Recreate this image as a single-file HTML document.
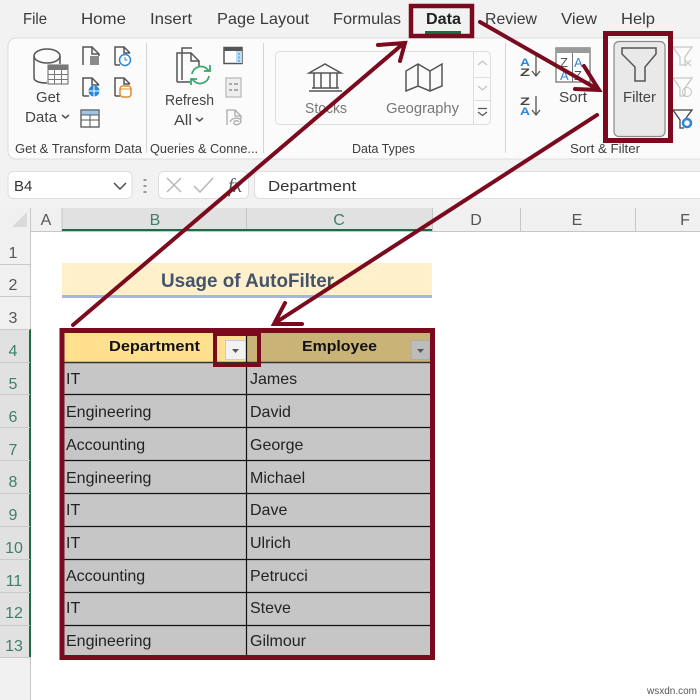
<!DOCTYPE html>
<html><head><meta charset="utf-8"><style>
html,body{margin:0;padding:0;background:#fff}
svg{display:block}
text{font-family:"Liberation Sans",sans-serif;fill:#333}
.tab{font-size:16px;fill:#3a3a3a}
.lb{font-size:14px;fill:#444}
.gl{font-size:13px;fill:#3d3d3d}
.rh{font-size:16px;fill:#555;text-anchor:middle}
.rs{font-size:16px;fill:#3f7f69;text-anchor:middle}
.d{font-size:16px;fill:#222}
.h{font-size:15px;font-weight:bold;fill:#111}
.ic{fill:none;stroke:#555;stroke-width:1.5}
.red{stroke:#7b0a1e;fill:none}
</style></head><body>
<svg width="700" height="700" viewBox="0 0 700 700" xmlns="http://www.w3.org/2000/svg">
<rect width="700" height="700" fill="#fff"/>
<rect width="700" height="231" fill="#f2f2f2"/>
<!-- tabs -->
<text class="tab" x="23" y="24" textLength="24" lengthAdjust="spacingAndGlyphs">File</text>
<text class="tab" x="81" y="24" textLength="45" lengthAdjust="spacingAndGlyphs">Home</text>
<text class="tab" x="150" y="24" textLength="42" lengthAdjust="spacingAndGlyphs">Insert</text>
<text class="tab" x="217" y="24" textLength="92" lengthAdjust="spacingAndGlyphs">Page Layout</text>
<text class="tab" x="333" y="24" textLength="68" lengthAdjust="spacingAndGlyphs">Formulas</text>
<text class="tab" x="426" y="24" textLength="35" lengthAdjust="spacingAndGlyphs" style="font-weight:bold;fill:#222">Data</text>
<text class="tab" x="485" y="24" textLength="52" lengthAdjust="spacingAndGlyphs">Review</text>
<text class="tab" x="561" y="24" textLength="36" lengthAdjust="spacingAndGlyphs">View</text>
<text class="tab" x="621" y="24" textLength="34" lengthAdjust="spacingAndGlyphs">Help</text>
<rect x="425" y="31" width="36" height="3" fill="#1e6b44"/>
<!-- ribbon -->
<rect x="8" y="38" width="720" height="121" rx="8" fill="#fbfbfb" stroke="#dcdcdc"/>
<path d="M146.500 43V153M263.500 43V153M505.500 43V153" stroke="#d4d4d4"/>
<!-- Get data -->
<g class="ic">
<path d="M34 56V78c0 3 5 5 13 5M60 56V64"/><ellipse cx="47" cy="56" rx="13" ry="7"/>
</g>
<rect x="48" y="65" width="20" height="19" fill="#fbfbfb" stroke="#666"/>
<rect x="48" y="65" width="20" height="5" fill="#777"/>
<path d="M48 74.500H68M48 79.500H68M54.500 70V84M61.500 70V84" stroke="#777"/>
<text x="36" y="102" style="font-size:14.500px;fill:#444" textLength="24" lengthAdjust="spacingAndGlyphs">Get</text>
<text x="25" y="122" style="font-size:14.500px;fill:#444" textLength="32" lengthAdjust="spacingAndGlyphs">Data</text>
<path d="M62 115l3.500 3 3.500-3" class="ic"/>
<g class="ic" stroke-width="1.300">
<path d="M83 65V47h9l7 7v2M92 47v7h7"/><path d="M115 65V47h9l6 6M124 47v6h6M115 65h5"/>
<path d="M83 96V78h9l7 7M92 78v7h7M83 96h6"/><path d="M115 96V78h9l6 6M124 78v6h6M115 96h5"/>
</g>
<rect x="90" y="56" width="9" height="9" fill="#8a8a8a"/>
<circle cx="125" cy="60" r="5.500" fill="#fff" stroke="#2b88d8" stroke-width="1.500"/><path d="M125 57v3h2.500" stroke="#2b88d8" fill="none"/>
<circle cx="94" cy="91" r="5.500" fill="#2b88d8"/><path d="M88.500 91h11M94 85.500v11" stroke="#fff"/>
<rect x="120" y="86" width="11" height="11" rx="3" fill="#fff" stroke="#e08a2e" stroke-width="1.500"/><path d="M120 89h11" stroke="#e08a2e"/>
<rect x="81" y="110" width="18" height="17" fill="#fff" stroke="#555" stroke-width="1.300"/><path d="M81 115h18" stroke="#5a5a5a" stroke-width="1"/><path d="M81 120h18M90 115v12" stroke="#555"/><rect x="82" y="110.500" width="16" height="4" fill="#9fc4e4"/>
<text class="gl" x="15" y="153" textLength="127" lengthAdjust="spacingAndGlyphs">Get &amp; Transform Data</text>
<!-- Refresh -->
<g class="ic">
<path d="M182 80V48h10"/><path d="M177 82V53h14l8 8v5"/><path d="M191 53v8h8"/><path d="M177 82h13"/>
</g>
<g fill="none" stroke="#3aa76d" stroke-width="1.800">
<path d="M192 74a9 9 0 0 1 15-5l2 2M209 76a9 9 0 0 1-15 5l-2-2"/>
<path d="M210 65v6h-6M191 85v-6h6"/>
</g>
<text x="165" y="105" style="font-size:14.500px;fill:#444" textLength="49" lengthAdjust="spacingAndGlyphs">Refresh</text>
<text x="174" y="125" style="font-size:14.500px;fill:#444" textLength="18" lengthAdjust="spacingAndGlyphs">All</text>
<path d="M196 118l3.500 3 3.500-3" class="ic"/>
<rect x="224" y="47.500" width="18" height="16" fill="#fff" stroke="#555" stroke-width="1.500"/><rect x="224" y="47.500" width="18" height="3.500" fill="#555"/><rect x="236" y="51" width="6" height="12" fill="#bcdcf2"/><path d="M239 53v9" stroke="#2b88d8" stroke-dasharray="2 1.500"/>
<rect x="226" y="78" width="15" height="19" fill="#eee" stroke="#bbb" stroke-width="1.300"/><path d="M229 84h3M234 84h4M229 90h3M234 90h4" stroke="#aaa" stroke-width="2"/>
<path d="M227 125V110h8l6 6v3M235 110v6h6" fill="none" stroke="#aaa" stroke-width="1.300"/><path d="M230 122c2-5 11-5 11-1s-7 5-7 2 4-3 5-1" fill="none" stroke="#aaa" stroke-width="1.300"/>
<text class="gl" x="150" y="153" textLength="108" lengthAdjust="spacingAndGlyphs">Queries &amp; Conne...</text>
<!-- Data types -->
<rect x="275.500" y="51.500" width="215" height="73" rx="4" fill="#fbfbfb" stroke="#dedede"/>
<path d="M473.500 52V124M473 77.500H491M473 100.500H491" stroke="#dedede"/>
<path d="M478 65l4.500-4 4.500 4M478 86l4.500 4 4.500-4" fill="none" stroke="#c4c4c4" stroke-width="1.200"/>
<path d="M478 108.500h9M478 112l4.500 3.500 4.500-3.500" fill="none" stroke="#555" stroke-width="1.200"/>
<g fill="none" stroke="#555" stroke-width="1.500">
<path d="M309 73l16-9 16 9zM309 91h33M312 88h27M314 73v15M321 73v15M330 73v15M337 73v15"/>
<path d="M406 71l12-7 12 7 12-7v22l-12 5-12-5-12 5zM418 64v22M430 71v20"/>
</g>
<text x="305" y="113" style="font-size:14.500px;fill:#777" textLength="42" lengthAdjust="spacingAndGlyphs">Stocks</text>
<text x="386" y="113" style="font-size:14.500px;fill:#777" textLength="73" lengthAdjust="spacingAndGlyphs">Geography</text>
<text class="gl" x="352" y="153" textLength="63" lengthAdjust="spacingAndGlyphs">Data Types</text>
<!-- Sort -->
<text x="520" y="66" style="font-size:11px;font-weight:bold;fill:#2b88d8" textLength="10" lengthAdjust="spacingAndGlyphs">A</text>
<text x="520" y="76" style="font-size:11px;font-weight:bold;fill:#444" textLength="10" lengthAdjust="spacingAndGlyphs">Z</text>
<text x="520" y="105" style="font-size:11px;font-weight:bold;fill:#444" textLength="10" lengthAdjust="spacingAndGlyphs">Z</text>
<text x="520" y="115" style="font-size:11px;font-weight:bold;fill:#2b88d8" textLength="10" lengthAdjust="spacingAndGlyphs">A</text>
<path d="M536 56v20M532 71l4 5 4-5M536 96v19M532 110l4 5 4-5" fill="none" stroke="#555" stroke-width="1.300"/>
<rect x="556" y="48" width="34" height="34" fill="#fff" stroke="#777" stroke-width="1.300"/><rect x="556" y="48" width="34" height="5" fill="#9a9a9a"/><path d="M572.500 53v29" stroke="#777"/>
<text x="560" y="67" style="font-size:13px;fill:#555">Z</text><text x="574" y="67" style="font-size:13px;fill:#2b88d8">A</text>
<text x="560" y="80" style="font-size:13px;fill:#2b88d8">A</text><text x="574" y="80" style="font-size:13px;fill:#555">Z</text>
<text x="559" y="102" style="font-size:14.500px;fill:#444" textLength="28" lengthAdjust="spacingAndGlyphs">Sort</text>
<!-- filter btn -->
<rect x="614" y="41.500" width="51" height="95" rx="5" fill="#e9e9e9" stroke="#8a8a8a" stroke-width="1.200"/>
<path d="M622 48h34v6l-11 13v14h-10V67l-13-13z" fill="none" stroke="#555" stroke-width="1.500"/>
<text x="623" y="102" style="font-size:14.500px;fill:#444" textLength="33" lengthAdjust="spacingAndGlyphs">Filter</text>
<path d="M673 47h19l-7 10v8l-5 0V57z" fill="none" stroke="#c8c8c8" stroke-width="1.300"/>
<path d="M685 60l6 6M691 60l-6 6" stroke="#c8c8c8" stroke-width="1.200"/>
<path d="M673 78h19l-7 10v8l-5 0V88z" fill="none" stroke="#c8c8c8" stroke-width="1.300"/>
<circle cx="687" cy="92" r="4.500" fill="none" stroke="#c0c0c0"/>
<path d="M673 110h19l-6 8M673 110l7 10v8h4" fill="none" stroke="#444" stroke-width="1.300"/>
<circle cx="687" cy="123" r="4" fill="none" stroke="#2b88d8" stroke-width="2.500"/>
<text class="gl" x="570" y="153" textLength="70" lengthAdjust="spacingAndGlyphs">Sort &amp; Filter</text>
<!-- formula bar -->
<rect x="8" y="171.500" width="124" height="27" rx="5" fill="#fff" stroke="#dedede"/>
<text x="14" y="191" style="font-size:15px;fill:#333">B4</text>
<path d="M114 183l6 6 6-6" fill="none" stroke="#444" stroke-width="1.400"/>
<path d="M145 179v2M145 185v2M145 191v2" stroke="#999" stroke-width="3"/>
<rect x="158.500" y="171.500" width="90" height="27" rx="5" fill="#fff" stroke="#dedede"/>
<path d="M167 178l14 14M181 178l-14 14M194 186l6 6 13-14" fill="none" stroke="#b8b8b8" stroke-width="1.500"/>
<text x="228" y="192" style="font-family:'Liberation Serif',serif;font-size:20px;font-style:italic;fill:#555">fx</text>
<rect x="254.500" y="171.500" width="460" height="27" rx="5" fill="#fff" stroke="#dedede"/>
<text x="268" y="191" style="font-size:15px;fill:#333" textLength="88" lengthAdjust="spacingAndGlyphs">Department</text>
<!-- col headers -->
<rect x="0" y="208" width="700" height="23" fill="#f0f0f0"/>
<rect x="62" y="208" width="370" height="22" fill="#e1e1e1"/>
<path d="M27 212V227H12z" fill="#dadada"/>
<path d="M30.500 208V700M62 208V231M246.500 208V230M432.500 208V231M520.500 208V231M635.500 208V231" stroke="#c6c6c6"/>
<path d="M0 231.500H700" stroke="#c6c6c6"/>
<rect x="62" y="229" width="370" height="2" fill="#1e6b44"/>
<text class="rh" x="46" y="225">A</text>
<text class="rs" x="155" y="225">B</text>
<text class="rs" x="339" y="225">C</text>
<text class="rh" x="476" y="225">D</text>
<text class="rh" x="577" y="225">E</text>
<text class="rh" x="685" y="225">F</text>
<!-- row headers -->
<rect x="0" y="231" width="30" height="469" fill="#f0f0f0"/>
<rect x="0" y="329" width="30" height="328" fill="#e1e1e1"/>
<rect x="29" y="329" width="2" height="328" fill="#1e6b44"/>
<path d="M0 264.500H30M0 296.500H30M0 329.500H30M0 362.500H30M0 394.500H30M0 427.500H30M0 460.500H30M0 493.500H30M0 526.500H30M0 559.500H30M0 592.500H30M0 625.500H30M0 657.500H30" stroke="#c9c9c9"/>
<text class="rh" x="13" y="258">1</text><text class="rh" x="13" y="290">2</text><text class="rh" x="13" y="323">3</text>
<text class="rs" x="13" y="356">4</text><text class="rs" x="13" y="389">5</text><text class="rs" x="13" y="422">6</text><text class="rs" x="13" y="455">7</text><text class="rs" x="13" y="487">8</text><text class="rs" x="13" y="520">9</text>
<text class="rs" x="14" y="553">10</text><text class="rs" x="14" y="586">11</text><text class="rs" x="14" y="618">12</text><text class="rs" x="14" y="651">13</text>
<!-- title -->
<rect x="62" y="263" width="370" height="33" fill="#fff0cb"/>
<rect x="62" y="295" width="370" height="3" fill="#a5b8d9"/>
<text x="161" y="287" style="font-size:19px;font-weight:bold;fill:#44546a" textLength="173" lengthAdjust="spacingAndGlyphs">Usage of AutoFilter</text>
<!-- table -->
<rect x="62" y="330" width="371" height="328" fill="#c6c6c6"/>
<rect x="62" y="330" width="185" height="32" fill="#ffe08f"/>
<rect x="247" y="330" width="186" height="32" fill="#c9b377"/>
<path d="M62 362.500H432" stroke="#333" stroke-width="1.500"/>
<path d="M62 394.500H432M62 427.500H432M62 460.500H432M62 493.500H432M62 526.500H432M62 559.500H432M62 592.500H432M62 625.500H432M246.500 330V656" stroke="#111" stroke-width="1.200"/>
<text class="h" x="109" y="351" textLength="91" lengthAdjust="spacingAndGlyphs">Department</text>
<text class="h" x="302" y="351" textLength="75" lengthAdjust="spacingAndGlyphs">Employee</text>
<rect x="225.500" y="340.500" width="20" height="19" fill="#f2f2f2" stroke="#ccc"/><path d="M232 349h7l-3.500 4z" fill="#555"/>
<rect x="411" y="340.500" width="19" height="19" fill="#bcbcbc" stroke="#aaa"/><path d="M417 349h7l-3.500 4z" fill="#555"/>
<text class="d" x="66" y="384">IT</text><text class="d" x="250" y="384">James</text>
<text class="d" x="66" y="417">Engineering</text><text class="d" x="250" y="417">David</text>
<text class="d" x="66" y="450">Accounting</text><text class="d" x="250" y="450">George</text>
<text class="d" x="66" y="483">Engineering</text><text class="d" x="250" y="483">Michael</text>
<text class="d" x="66" y="515">IT</text><text class="d" x="250" y="515">Dave</text>
<text class="d" x="66" y="548">IT</text><text class="d" x="250" y="548">Ulrich</text>
<text class="d" x="66" y="581">Accounting</text><text class="d" x="250" y="581">Petrucci</text>
<text class="d" x="66" y="613">IT</text><text class="d" x="250" y="613">Steve</text>
<text class="d" x="66" y="646">Engineering</text><text class="d" x="250" y="646">Gilmour</text>
<!-- red frames -->
<g class="red" stroke-width="5">
<rect x="62" y="330.500" width="370.500" height="327"/>
<rect x="215" y="334" width="44" height="31" stroke-width="4"/>
<rect x="411" y="6" width="61" height="30" stroke-width="4.500"/>
<rect x="605.500" y="33.500" width="65" height="107"/>
</g>
<g class="red" stroke-width="4" stroke-linecap="round" fill="none">
<path d="M73 325L404 43M378 45L405 43L400 61"/>
<path d="M480 22L599 90M584 66L599 90L575 89"/>
<path d="M597 115L275 323M285 303L274 324L302 324"/>
</g>
<text x="647" y="694" style="font-size:10px;fill:#555">wsxdn.com</text>
</svg>
</body></html>
